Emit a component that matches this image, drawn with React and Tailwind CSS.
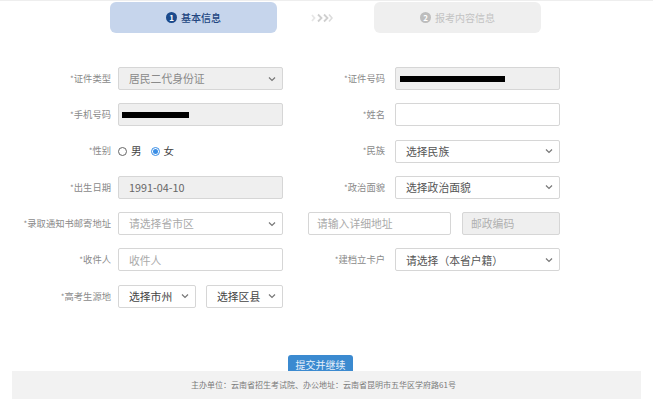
import React from "react";

const FONT = { fontFamily: '"Noto Sans CJK SC", "Noto Sans", sans-serif' };

function Chevron() {
  return (
    <svg width="8" height="6" viewBox="0 0 8 6" className="shrink-0">
      <path d="M1 1.5 L4 4.5 L7 1.5" fill="none" stroke="#777" strokeWidth="1.2" />
    </svg>
  );
}

function Label({ children, w }) {
  return (
    <div className={`${w} shrink-0 text-right text-[9.3px] text-[#8a8a8a] leading-none`}>
      <span className="text-[8px]">*</span>
      {children}
    </div>
  );
}

function Box({ w, gray, children, select, color = "text-[#666]", pl = "pl-[10px]", ml = "" }) {
  return (
    <div
      className={`${w} ${ml} h-[23px] shrink-0 flex items-center justify-between ${pl} pr-[6px] border border-[#d6d6d6] rounded-[2px] ${gray ? "bg-[#efefef]" : "bg-white"} text-[10.8px] ${color} leading-none`}
    >
      <div className="flex items-center whitespace-nowrap">{children}</div>
      {select && <Chevron />}
    </div>
  );
}

export default function App() {
  return (
    <div className="w-[653px] h-[399px] bg-white overflow-hidden relative" style={FONT}>
      <div className="h-px bg-[#eeeeee]" />
      {/* steps */}
      <div className="flex items-center mt-[1px] pl-[110px]">
        <div className="w-[167px] h-[31px] rounded-[6px] bg-[#c6d5ec] flex items-center justify-center gap-[4px]">
          <span className="w-[11px] h-[11px] rounded-full bg-[#1b4a8c] text-white text-[8px] leading-none flex items-center justify-center font-bold">1</span>
          <span className="text-[10px] text-[#21457f] font-medium leading-none">基本信息</span>
        </div>
        <div className="w-[97px] flex justify-center pr-[10px]">
          <svg width="24" height="10" viewBox="0 0 24 10">
            <path d="M3 2 L5.5 5 L3 8" fill="none" stroke="#e6e6e6" strokeWidth="1.8" />
            <path d="M9 1.5 L12.5 5 L9 8.5" fill="none" stroke="#cfcfcf" strokeWidth="1.8" />
            <path d="M15 1.5 L18.5 5 L15 8.5" fill="none" stroke="#cfcfcf" strokeWidth="1.8" />
            <path d="M20 1.5 L23 5 L20 8.5" fill="none" stroke="#dcdcdc" strokeWidth="1.6" />
          </svg>
        </div>
        <div className="w-[167px] h-[31px] rounded-[6px] bg-[#efefef] flex items-center justify-center gap-[4px]">
          <span className="w-[11px] h-[11px] rounded-full bg-[#bdbdbd] text-white text-[8px] leading-none flex items-center justify-center font-bold">2</span>
          <span className="text-[10px] text-[#c2c2c2] leading-none">报考内容信息</span>
        </div>
      </div>

      {/* form */}
      <div className="mt-[34px] flex flex-col gap-[13.3px]">
        <div className="flex items-center">
          <Label w="w-[111px]">证件类型</Label>
          <Box w="w-[165px]" ml="ml-[7px]" gray select color="text-[#8a8a8a]">居民二代身份证</Box>
          <Label w="w-[102px]">证件号码</Label>
          <Box w="w-[165px]" ml="ml-[10px]" gray pl="pl-[4px]">
            <div className="w-[105px] h-[6px] bg-black" />
          </Box>
        </div>
        <div className="flex items-center">
          <Label w="w-[111px]">手机号码</Label>
          <Box w="w-[165px]" ml="ml-[7px]" gray pl="pl-[3px]">
            <div className="w-[67px] h-[6px] bg-black" />
          </Box>
          <Label w="w-[102px]">姓名</Label>
          <Box w="w-[165px]" ml="ml-[10px]" />
        </div>
        <div className="flex items-center">
          <Label w="w-[111px]">性别</Label>
          <div className="ml-[7px] w-[165px] h-[23px] flex items-center text-[10.5px] text-[#444] leading-none">
            <span className="w-[9px] h-[9px] rounded-full border border-[#666] bg-white" />
            <span className="ml-[4px]">男</span>
            <span className="ml-[9px] w-[9px] h-[9px] rounded-full border border-[#3a8ee6] bg-white flex items-center justify-center">
              <span className="w-[5px] h-[5px] rounded-full bg-[#3a8ee6]" />
            </span>
            <span className="ml-[4px]">女</span>
          </div>
          <Label w="w-[102px]">民族</Label>
          <Box w="w-[165px]" ml="ml-[10px]" select color="text-[#555]">选择民族</Box>
        </div>
        <div className="flex items-center">
          <Label w="w-[111px]">出生日期</Label>
          <Box w="w-[165px]" ml="ml-[7px]" gray color="text-[#666]">1991-04-10</Box>
          <Label w="w-[102px]">政治面貌</Label>
          <Box w="w-[165px]" ml="ml-[10px]" select color="text-[#555]">选择政治面貌</Box>
        </div>
        <div className="flex items-center">
          <Label w="w-[111px]">录取通知书邮寄地址</Label>
          <Box w="w-[165px]" ml="ml-[7px]" select color="text-[#aaa]">请选择省市区</Box>
          <Box w="w-[143px]" ml="ml-[25px]" pl="pl-[8px]" color="text-[#aaa]">请输入详细地址</Box>
          <Box w="w-[98px]" ml="ml-[11px]" gray pl="pl-[8px]" color="text-[#b0b0b0]">邮政编码</Box>
        </div>
        <div className="flex items-center">
          <Label w="w-[111px]">收件人</Label>
          <Box w="w-[165px]" ml="ml-[7px]" color="text-[#aaa]">收件人</Box>
          <Label w="w-[102px]">建档立卡户</Label>
          <Box w="w-[165px]" ml="ml-[10px]" select color="text-[#555]">请选择（本省户籍）</Box>
        </div>
        <div className="flex items-center">
          <Label w="w-[111px]">高考生源地</Label>
          <Box w="w-[78px]" ml="ml-[7px]" select color="text-[#444]">选择市州</Box>
          <Box w="w-[77px]" ml="ml-[10px]" select color="text-[#444]">选择区县</Box>
        </div>
      </div>

      {/* submit */}
      <div className="mt-[47px] flex pl-[288px]">
        <div className="w-[65px] h-[24px] rounded-t-[3px] bg-[#3b8ad0] text-[10px] text-[#e6f0fb] flex justify-center pt-[5px] leading-none">
          提交并继续
        </div>
      </div>
      <div className="relative -mt-[8px] mx-[12px] h-[40px] bg-[#f2f2f2] flex justify-center pt-[10px] pr-[6px]">
        <span className="text-[8px] text-[#7a7a7a] leading-none">
          主办单位：云南省招生考试院、办公地址：云南省昆明市五华区学府路61号
        </span>
      </div>
    </div>
  );
}
